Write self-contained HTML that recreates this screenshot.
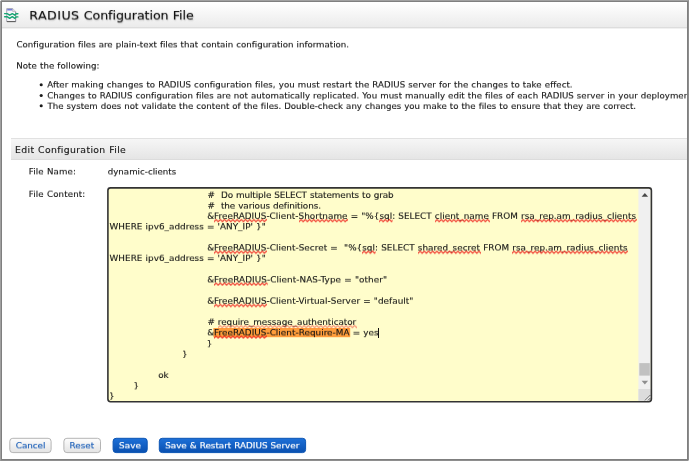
<!DOCTYPE html>
<html lang="en">
<head>
<meta charset="utf-8">
<title>RADIUS Configuration File</title>
<style>
html,body{margin:0;padding:0;}
body{width:689px;height:461px;overflow:hidden;background:#fff;position:relative;
  font-family:"DejaVu Sans","Liberation Sans",sans-serif;
  font-size:9px;color:#111;-webkit-text-stroke:0.12px #111;word-spacing:0.3px;}
#page{position:absolute;left:0;top:0;width:689px;height:461px;overflow:hidden;}
.a{position:absolute;}
.t{position:absolute;white-space:nowrap;line-height:10px;will-change:transform;}
#title{line-height:15px;}
#sect{line-height:11px;}
#hdr{left:2px;top:2px;width:685px;height:25px;background:linear-gradient(#ffffff,#ebebeb);border-bottom:1px solid #dddddd;box-shadow:0 1px 0 #f1f1f1;}
#sec{left:11px;top:138px;width:678px;height:20px;background:linear-gradient(#f6f6f6,#e5e5e5);border-top:1px solid #e1e1e1;border-bottom:1px solid #dcdcdc;}
.sq{position:relative;display:inline-block;}
.sq .w{position:absolute;left:0;bottom:-2.1px;width:calc(100% + 0.9px);height:4px;overflow:hidden;}
#bd{left:0;top:0;width:687px;height:459px;border:1px solid;border-color:#a0a0a0 #8e8e8e #8e8e8e #a0a0a0;pointer-events:none;}
#bd2{left:1px;top:1px;width:685px;height:457px;border:1px solid #7f7f7f;pointer-events:none;}
.cx{position:absolute;width:1px;height:1px;}
</style>
</head>
<body>
<div id="page">
<svg width="0" height="0" style="position:absolute"><defs>
  <pattern id="wv" width="4.200" height="4" patternUnits="userSpaceOnUse"><path d="M-2.100 0.700L0 3.100L2.100 0.700L4.200 3.100L6.300 0.700" fill="none" stroke="#f0271f" stroke-width="1.050" stroke-linejoin="round"/></pattern>
</defs></svg>

<div class="a" id="hdr"></div>
<svg class="a" style="left:3px;top:6px" width="17" height="18" viewBox="3 6 17 18">
  <path d="M6.700 8.600h6l2.900 2.900v10h-8.900z" fill="#f5f5f8" stroke="#a2a2ae" stroke-width="0.900"/>
  <path d="M12.700 8.600v2.900h2.900" fill="#e4e4ea" stroke="#a2a2ae" stroke-width="0.600"/>
  <rect x="7.200" y="8.900" width="5.100" height="1.600" fill="#777ed6"/>
  <path d="M6.900 21.600h8.900" stroke="#5e5e5e" stroke-width="1.100"/>
  <path d="M15.700 12v9.500" stroke="#8c8c96" stroke-width="0.800"/>
  <path d="M4.600 13.600H7.100L9.700 15.200L12.300 13.600L14.800 15.200L16.200 13.800H17.900" fill="none" stroke="#17a673" stroke-width="1.400" stroke-linejoin="round" stroke-linecap="round"/>
  <path d="M4.600 16.700H7.100L9.700 18.300L12.300 16.700L14.800 18.300L16.200 16.900H17.900" fill="none" stroke="#17a673" stroke-width="1.400" stroke-linejoin="round" stroke-linecap="round"/>
</svg>


<svg class="a" style="left:36px;top:80px" width="12" height="30" viewBox="36 80 12 30">
  <circle cx="41.200" cy="84.800" r="1.550" fill="#1c1c1c"/><circle cx="41.200" cy="95.500" r="1.550" fill="#1c1c1c"/><circle cx="41.200" cy="105.800" r="1.550" fill="#1c1c1c"/>
</svg>
<div class="a" id="sec"></div>

<!-- textarea frame + scrollbar -->
<svg class="a" style="left:100px;top:180px" width="560" height="230" viewBox="100 180 560 230">
  <rect x="107.900" y="187.900" width="543.500" height="213.800" rx="2.600" fill="#fffdcb" stroke="none"/>
  <rect x="213.400" y="328" width="136.800" height="9.200" fill="#ff9d3b"/>
  <rect x="638.400" y="188.700" width="12.300" height="212" fill="#f0f0f0"/>
  <rect x="639.300" y="363.100" width="10.500" height="12.500" fill="#c1c1c1"/>
  <rect x="638.400" y="389" width="12.300" height="11.800" fill="#dcdcdc"/>
  <path d="M641.600 196.800L644.850 193L648.100 196.800z" fill="#484848"/>
  <path d="M641.600 380.800L644.850 384.400L648.100 380.800z" fill="#8e8e8e"/>
  <path d="M650.400 395L645 400.400M650.400 398L648 400.400" stroke="#555" stroke-width="0.900" fill="none"/><path d="M650.400 396.200L646.200 400.400" stroke="#fff" stroke-width="0.700" fill="none"/>
  <rect x="107.900" y="187.900" width="543.500" height="213.800" rx="2.600" fill="none" stroke="#333" stroke-width="1.600"/>
</svg>

<svg class="a" style="left:0;top:430px" width="320" height="30" viewBox="0 430 320 30">
  <defs>
    <linearGradient id="gg" x1="0" y1="0" x2="0" y2="1"><stop offset="0" stop-color="#fdfdfd"/><stop offset="1" stop-color="#e3e3e3"/></linearGradient>
    <linearGradient id="gb" x1="0" y1="0" x2="0" y2="1"><stop offset="0" stop-color="#1d70d8"/><stop offset="1" stop-color="#0a50b0"/></linearGradient>
  </defs>
  <rect x="9.800" y="438.300" width="41.300" height="14.300" rx="3" fill="url(#gg)" stroke="#b4b4b4"/>
  <rect x="63.900" y="438.300" width="36.600" height="14.300" rx="3" fill="url(#gg)" stroke="#b4b4b4"/>
  <rect x="113.100" y="438.300" width="34.100" height="14.300" rx="3" fill="url(#gb)" stroke="#0c55b4"/>
  <rect x="159.300" y="438.300" width="146.300" height="14.300" rx="3" fill="url(#gb)" stroke="#0c55b4"/>
</svg>

<div class="t" id="title" style="left:29px;top:7px;font-size:12.6px;letter-spacing:-0.055px;padding-left:0.36px;transform-origin:0 12px;transform:translate3d(0,0.50px,0) rotate(0.001deg) scale(1,0.950);color:#111;-webkit-text-stroke:0.1px #111;text-shadow:0.5px 1px 1.5px rgba(0,0,0,0.28)"><span style="letter-spacing:0.45px">RADIUS</span> Configuration File</div>
<div class="t" id="p1" style="left:16px;top:39px;font-size:8.65px;letter-spacing:0.002px;padding-left:0.46px;transform-origin:0 8px;transform:translate3d(0,0.40px,0) rotate(0.001deg) scale(1,0.910);">Configuration files are plain-text files that contain configuration information.</div>
<div class="t" id="p2" style="left:16px;top:60px;font-size:8.65px;letter-spacing:0.048px;padding-left:0.25px;transform-origin:0 8px;transform:translate3d(0,0.60px,0) rotate(0.001deg) scale(1,0.910);">Note the following:</div>
<div class="t" id="b1" style="left:47px;top:79px;font-size:8.65px;letter-spacing:0.046px;padding-left:0.33px;transform-origin:0 8px;transform:translate3d(0,0.50px,0) rotate(0.001deg) scale(1,0.910);">After making changes to RADIUS configuration files, you must restart the RADIUS server for the changes to take effect.</div>
<div class="t" id="b2" style="left:47px;top:90px;font-size:8.65px;letter-spacing:0.018px;padding-left:0.31px;transform-origin:0 8px;transform:translate3d(0,0.46px,0) rotate(0.001deg) scale(1,0.910);">Changes to RADIUS configuration files are not automatically replicated. You must manually edit the files of each RADIUS server in your deployment.</div>
<div class="t" id="b3" style="left:47px;top:101px;font-size:8.65px;letter-spacing:-0.005px;padding-left:0.53px;transform-origin:0 8px;transform:translate3d(0,0.00px,0) rotate(0.001deg) scale(1,0.910);">The system does not validate the content of the files. Double-check any changes you make to the files to ensure that they are correct.</div>
<div class="t" id="sect" style="left:15px;top:144px;font-size:9.3px;letter-spacing:0.347px;padding-left:0.06px;transform-origin:0 9px;transform:translate3d(0,0.03px,0) rotate(0.001deg) scale(1,1.000);color:#151515">Edit Configuration File</div>
<div class="t" id="fn" style="left:28px;top:166px;font-size:8.65px;letter-spacing:0.153px;padding-left:0.75px;transform-origin:0 8px;transform:translate3d(0,0.40px,0) rotate(0.001deg) scale(1,0.910);">File Name:</div>
<div class="t" id="dc" style="left:107px;top:166px;font-size:8.65px;letter-spacing:0.022px;padding-left:0.72px;transform-origin:0 8px;transform:translate3d(0,0.50px,0) rotate(0.001deg) scale(1,0.910);">dynamic-clients</div>
<div class="t" id="fc" style="left:28px;top:189px;font-size:8.65px;letter-spacing:0.152px;padding-left:0.75px;transform-origin:0 8px;transform:translate3d(0,0.00px,0) rotate(0.001deg) scale(1,0.910);">File Content:</div>
<div class="t" id="l1" style="left:207px;top:189px;font-size:8.85px;letter-spacing:-0.104px;padding-left:0.62px;transform-origin:0 8px;transform:translate3d(0,0.90px,0) rotate(0.001deg) scale(1,0.910);">#&nbsp; Do multiple SELECT statements to grab</div>
<div class="t" id="l2" style="left:207px;top:200px;font-size:8.85px;letter-spacing:-0.091px;padding-left:0.62px;transform-origin:0 8px;transform:translate3d(0,0.60px,0) rotate(0.001deg) scale(1,0.910);">#&nbsp; the various definitions.</div>
<div class="t" id="l3" style="left:207px;top:210px;font-size:8.85px;letter-spacing:0.021px;padding-left:0.14px;transform-origin:0 8px;transform:translate3d(0,0.85px,0) rotate(0.001deg) scale(1,0.910);">&amp;<span class="sq">FreeRADIUS<svg class="w" preserveAspectRatio="none"><rect width="100%" height="4" fill="url(#wv)"/></svg></span>-Client-<span class="sq">Shortname<svg class="w" preserveAspectRatio="none"><rect width="100%" height="4" fill="url(#wv)"/></svg></span> = "%{<span class="sq">sql<svg class="w" preserveAspectRatio="none"><rect width="100%" height="4" fill="url(#wv)"/></svg></span>: SELECT <span class="sq">client_name<svg class="w" preserveAspectRatio="none"><rect width="100%" height="4" fill="url(#wv)"/></svg></span> FROM <span class="sq">rsa_rep.am_radius_clients<svg class="w" preserveAspectRatio="none"><rect width="100%" height="4" fill="url(#wv)"/></svg></span></div>
<div class="t" id="l4" style="left:109px;top:221px;font-size:8.85px;letter-spacing:0.018px;padding-left:0.61px;transform-origin:0 8px;transform:translate3d(0,0.40px,0) rotate(0.001deg) scale(1,0.910);">WHERE ipv6_address = 'ANY_IP' }"</div>
<div class="t" id="l6" style="left:207px;top:242px;font-size:8.85px;letter-spacing:0.031px;padding-left:0.14px;transform-origin:0 8px;transform:translate3d(0,0.50px,0) rotate(0.001deg) scale(1,0.910);">&amp;<span class="sq">FreeRADIUS<svg class="w" preserveAspectRatio="none"><rect width="100%" height="4" fill="url(#wv)"/></svg></span>-Client-Secret =&nbsp; "%{<span class="sq">sql<svg class="w" preserveAspectRatio="none"><rect width="100%" height="4" fill="url(#wv)"/></svg></span>: SELECT <span class="sq">shared_secret<svg class="w" preserveAspectRatio="none"><rect width="100%" height="4" fill="url(#wv)"/></svg></span> FROM <span class="sq">rsa_rep.am_radius_clients<svg class="w" preserveAspectRatio="none"><rect width="100%" height="4" fill="url(#wv)"/></svg></span></div>
<div class="t" id="l7" style="left:109px;top:253px;font-size:8.85px;letter-spacing:0.018px;padding-left:0.61px;transform-origin:0 8px;transform:translate3d(0,0.05px,0) rotate(0.001deg) scale(1,0.910);">WHERE ipv6_address = 'ANY_IP' }"</div>
<div class="t" id="l9" style="left:207px;top:274px;font-size:8.85px;letter-spacing:0.073px;padding-left:0.14px;transform-origin:0 8px;transform:translate3d(0,0.45px,0) rotate(0.001deg) scale(1,0.910);">&amp;<span class="sq">FreeRADIUS<svg class="w" preserveAspectRatio="none"><rect width="100%" height="4" fill="url(#wv)"/></svg></span>-Client-NAS-Type = "other"</div>
<div class="t" id="l11" style="left:207px;top:295px;font-size:8.85px;letter-spacing:0.041px;padding-left:0.14px;transform-origin:0 8px;transform:translate3d(0,0.75px,0) rotate(0.001deg) scale(1,0.910);">&amp;<span class="sq">FreeRADIUS<svg class="w" preserveAspectRatio="none"><rect width="100%" height="4" fill="url(#wv)"/></svg></span>-Client-Virtual-Server = "default"</div>
<div class="t" id="l13" style="left:207px;top:316px;font-size:8.85px;letter-spacing:-0.053px;padding-left:0.42px;transform-origin:0 8px;transform:translate3d(0,0.85px,0) rotate(0.001deg) scale(1,0.910);"># <span class="sq">require_message_authenticator<svg class="w" style="opacity:.55" preserveAspectRatio="none"><rect width="100%" height="4" fill="url(#wv)"/></svg></span></div>
<div class="t" id="l14" style="left:207px;top:327px;font-size:8.85px;letter-spacing:0.027px;padding-left:0.14px;transform-origin:0 8px;transform:translate3d(0,0.40px,0) rotate(0.001deg) scale(1,0.910);">&amp;<span class="sq">FreeRADIUS<svg class="w" preserveAspectRatio="none"><rect width="100%" height="4" fill="url(#wv)"/></svg></span>-Client-Require-MA = yes</div>
<div class="t" id="l15" style="left:206px;top:338px;font-size:8.85px;letter-spacing:0.000px;padding-left:0.69px;transform-origin:0 8px;transform:translate3d(0,0.45px,0) rotate(0.001deg) scale(1,0.910);">}</div>
<div class="t" id="l16" style="left:181px;top:349px;font-size:8.85px;letter-spacing:0.000px;padding-left:0.99px;transform-origin:0 8px;transform:translate3d(0,0.00px,0) rotate(0.001deg) scale(1,0.910);">}</div>
<div class="t" id="l18" style="left:158px;top:370px;font-size:8.85px;letter-spacing:0.000px;padding-left:0.21px;transform-origin:0 8px;transform:translate3d(0,0.00px,0) rotate(0.001deg) scale(1,0.910);">ok</div>
<div class="t" id="l19" style="left:133px;top:380px;font-size:8.85px;letter-spacing:0.000px;padding-left:0.39px;transform-origin:0 8px;transform:translate3d(0,0.55px,0) rotate(0.001deg) scale(1,0.910);">}</div>
<div class="t" id="l20" style="left:109px;top:390px;font-size:8.85px;letter-spacing:0.000px;padding-left:0.09px;transform-origin:0 8px;transform:translate3d(0,0.80px,0) rotate(0.001deg) scale(1,0.910);">}</div>
<div class="t" id="t_cancel" style="left:15px;top:440px;font-size:8.8px;letter-spacing:-0.032px;padding-left:0.81px;transform-origin:0 8px;transform:translate3d(0,0.40px,0) rotate(0.001deg) scale(1,0.910);color:#1b5fb8;-webkit-text-stroke:0.15px #1b5fb8">Cancel</div>
<div class="t" id="t_reset" style="left:69px;top:440px;font-size:8.8px;letter-spacing:0.019px;padding-left:0.54px;transform-origin:0 8px;transform:translate3d(0,0.40px,0) rotate(0.001deg) scale(1,0.910);color:#1b5fb8;-webkit-text-stroke:0.15px #1b5fb8">Reset</div>
<div class="t" id="t_save" style="left:119px;top:440px;font-size:8.8px;letter-spacing:0.089px;padding-left:0.02px;transform-origin:0 8px;transform:translate3d(0,0.40px,0) rotate(0.001deg) scale(1,0.910);color:#fff;-webkit-text-stroke:0.18px #fff">Save</div>
<div class="t" id="t_sr" style="left:165px;top:440px;font-size:8.8px;letter-spacing:-0.014px;padding-left:0.22px;transform-origin:0 8px;transform:translate3d(0,0.40px,0) rotate(0.001deg) scale(1,0.910);color:#fff;-webkit-text-stroke:0.18px #fff">Save &amp; Restart RADIUS Server</div>
<div class="a" style="left:378.200px;top:328px;width:1px;height:9.500px;background:#111"></div>

<div class="a" id="bd"></div><div class="a" id="bd2"></div><div class="cx" style="left:0;top:0;background:#ececec"></div><div class="cx" style="left:688px;top:460px;background:#c4c4c4"></div>
</div>
</body>
</html>
